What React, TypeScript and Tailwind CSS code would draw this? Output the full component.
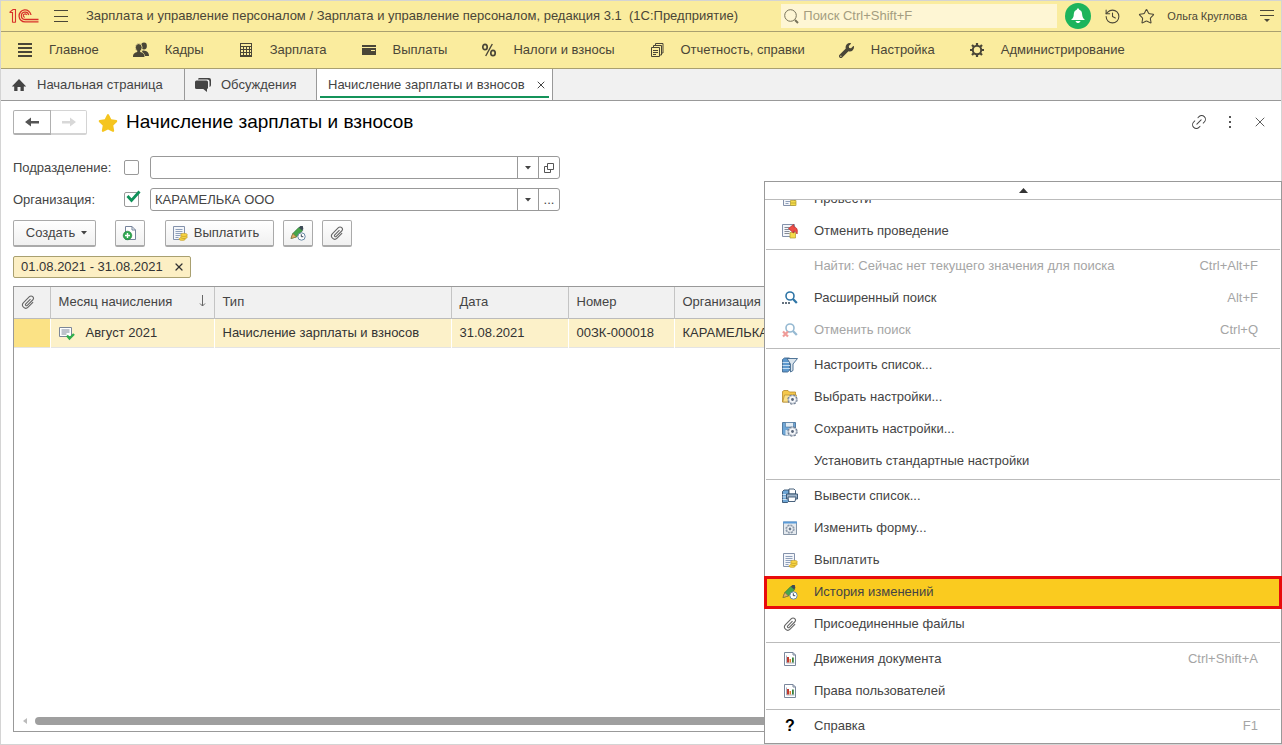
import React from "react";
import { History, Link2, Star, X } from "lucide-react";
import { FaStar, FaWrench } from "react-icons/fa";

/* ---------- Icons ---------- */

function Logo() {
  return (
    <svg width="30" height="16" viewBox="0 0 30 16" fill="none" stroke="#d8312a" aria-label="1С">
      <path d="M0.500 4.500H3.500V14.500M0.800 4.200L4 1.500H6.500V14.500M3.500 14.300H6.500" strokeWidth="1.100" />
      <path d="M22 7A6 6 0 1 0 16 13.900H29.500" strokeWidth="1.300" />
      <path d="M19.700 7A3.700 3.700 0 1 0 16 11.500H29.500" strokeWidth="1.300" />
      <path d="M17.600 7A1.700 1.700 0 1 0 16 9.300" strokeWidth="1.100" />
    </svg>
  );
}

function LinesIcon() {
  return (
    <svg width="16" height="16" viewBox="0 0 16 16" fill="#4a4637">
      <path d="M1 1h14v2H1zM1 5h14v2H1zM1 9h14v2H1zM1 13h14v2H1z" />
    </svg>
  );
}

function PeopleIcon() {
  return (
    <svg width="16" height="16" viewBox="0 0 16 16" fill="#4a4637">
      <ellipse cx="11" cy="4" rx="2.900" ry="3.400" />
      <path d="M9.500 8.500c3 0 6.500 1 6.500 5.500h-4c-.3-2-1.200-3-3-4z" />
      <ellipse cx="5.700" cy="5.500" rx="3.400" ry="3.900" stroke="#faec9e" strokeWidth="0.800" />
      <path d="M4.300 8h2.800v2c2.500.5 4.400 1.500 4.400 5H0c0-3.500 1.800-4.500 4.300-5z" />
    </svg>
  );
}

function CalculatorIcon() {
  return (
    <svg width="16" height="16" viewBox="0 0 16 16">
      <rect x="2" y="1" width="12" height="14" fill="#4a4637" />
      <rect x="3" y="2" width="10" height="2" fill="#faec9e" />
      {[5, 8, 11].map((y) =>
        [3, 6, 9, 12].map((x) => (
          <rect key={`${x}-${y}`} x={x} y={y} width={x === 12 ? 1 : 2} height="2" fill="#faec9e" />
        ))
      )}
    </svg>
  );
}

function CardIcon() {
  return (
    <svg width="16" height="16" viewBox="0 0 16 16">
      <path d="M1 3h14v2H1zM1 6h14v7H1z" fill="#4a4637" />
      <rect x="10" y="8" width="4" height="1" fill="#faec9e" />
    </svg>
  );
}

function PercentIcon() {
  return (
    <svg width="16" height="16" viewBox="0 0 16 16" fill="none" stroke="#4a4637" strokeWidth="1.700">
      <ellipse cx="4" cy="5" rx="2.200" ry="2.700" />
      <ellipse cx="12" cy="11" rx="2.200" ry="2.700" />
      <path d="M11.300 2L4.700 14" strokeWidth="1.400" />
    </svg>
  );
}

function PagesIcon() {
  return (
    <svg width="16" height="16" viewBox="0 0 16 16" fill="none" stroke="#4a4637">
      <path d="M2.500 5.500h8v9h-8zM4.500 5V3.500h8v9.500H11M6.500 3V1.500h7.500v9.500H13" />
      <path d="M4 8.500h5M4 10.500h5M4 12.500h3" />
    </svg>
  );
}

function GearIcon() {
  return (
    <svg width="16" height="16" viewBox="0 0 16 16" fill="none" stroke="#4a4637">
      <circle cx="8" cy="8" r="4.200" strokeWidth="2" />
      <path
        d="M8 1v2.500M8 12.500V15M1 8h2.500M12.500 8H15M3 3l2 2M11 11l2 2M13 3l-2 2M5 11l-2 2"
        strokeWidth="2.200"
      />
    </svg>
  );
}

function HomeIcon() {
  return (
    <svg width="16" height="16" viewBox="0 0 16 16" fill="#444">
      <path d="M8 2L.8 9.500h2.400V14h3.300v-4h3v4h3.300V9.500h2.400z" />
    </svg>
  );
}

function ChatIcon() {
  return (
    <svg width="18" height="16" viewBox="0 0 18 16" fill="#444">
      <path d="M5 1h10a2 2 0 0 1 2 2v5a2 2 0 0 1-1.500 2V4.500a2 2 0 0 0-2-2H4A2 2 0 0 1 5 1z" />
      <rect x="1" y="3.500" width="13" height="8.500" rx="1.500" />
      <path d="M8 11h5v4z" />
    </svg>
  );
}

function CaretDown() {
  return (
    <svg width="6" height="4" viewBox="0 0 6 4" fill="#444" className="shrink-0">
      <path d="M0 0h6L3 3.500z" />
    </svg>
  );
}

function Clip() {
  return (
    <svg width="16" height="16" viewBox="0 0 16 16" fill="none" stroke="#666" strokeWidth="1.100">
      <path d="M10.500 5.200L5.800 9.900a1 1 0 0 0 1.500 1.500l5.400-5.400a2.300 2.300 0 0 0-3.300-3.300L3.500 8.600a3.200 3.200 0 0 0 4.600 4.600l5-5" />
    </svg>
  );
}

function Sheet() {
  return (
    <>
      <path d="M1.500 1.500h11v13h-11z" fill="#f4f6fa" stroke="#8492ab" />
      <path d="M3.500 4.500h7M3.500 6.500h7M3.500 8.500h7M3.500 10.500h5M3.500 12.500h3" stroke="#8fa0bb" />
    </>
  );
}

function Coins() {
  return (
    <g fill="#f7d443" stroke="#b08a1c" strokeWidth="0.500">
      <ellipse cx="10.200" cy="13.900" rx="3.200" ry="1.500" />
      <ellipse cx="12" cy="12" rx="3.400" ry="1.600" />
      <ellipse cx="12" cy="9.900" rx="3.400" ry="1.600" />
    </g>
  );
}

function PayIcon() {
  return (
    <svg width="16" height="16" viewBox="0 0 16 16">
      <Sheet />
      <Coins />
    </svg>
  );
}

function PostIcon() {
  return (
    <svg width="16" height="16" viewBox="0 0 16 16">
      <Sheet />
      <path d="M8.500 9.500h5.500v5h-5.500z" fill="#f5dc4a" stroke="#b09a2c" strokeWidth="0.700" />
      <path d="M8.500 12h5.500" stroke="#b09a2c" strokeWidth="0.700" />
    </svg>
  );
}

function UnpostIcon() {
  return (
    <svg width="16" height="16" viewBox="0 0 16 16">
      <path d="M0.500 1.500h12v12h-12z" fill="#f4f6fa" stroke="#8492ab" />
      <path d="M2.500 4.500h5M2.500 6.500h5M2.500 8.500h5M2.500 10.500h5" stroke="#858b96" />
      <path d="M8 9.500h5.500v5.500H8z" fill="#f5dc4a" stroke="#b09a2c" strokeWidth="0.700" />
      <path d="M6.500 5.500l5-4v2.200c3.500.3 4.500 3.500 3.500 7.300-.8-2-1.700-2.800-3.500-3v2z" fill="#ee4c46" stroke="#b3241f" strokeWidth="0.700" />
    </svg>
  );
}

function AddDocIcon() {
  return (
    <svg width="16" height="16" viewBox="0 0 16 16">
      <path d="M3.500 1.500h6.500l3.500 3.500v9.500H3.500z" fill="#fff" stroke="#75839b" />
      <path d="M10 1.500V5h3.500" fill="none" stroke="#75839b" />
      <circle cx="5.500" cy="10.500" r="4.300" fill="#2fa84f" stroke="#1b7d38" strokeWidth="0.600" />
      <path d="M5.500 8v5M3 10.500h5" stroke="#fff" strokeWidth="1.400" />
    </svg>
  );
}

function PencilClockIcon() {
  return (
    <svg width="16" height="16" viewBox="0 0 16 16">
      <path d="M1 13.500l1.800-5L9 2.300l3.600 3.300-6.200 6.300z" fill="#47a64b" stroke="#2d7437" strokeWidth="0.700" />
      <path d="M1 13.500l1.800-5 3.600 3.400z" fill="#e3b06a" stroke="#8d6b3b" strokeWidth="0.600" />
      <path d="M8.800 2.500l1.500-1.400h2.500l.6 3-1.200 1.500z" fill="#3c4a55" />
      <circle cx="11.500" cy="11.500" r="3.700" fill="#fff" stroke="#6889a5" />
      <path d="M11.300 9.300v2.400h2" fill="none" stroke="#345" />
    </svg>
  );
}

function DocCheckIcon() {
  return (
    <svg width="16" height="16" viewBox="0 0 16 16" fill="none">
      <path d="M.5 2.500h12v9H.5z" fill="#fff" stroke="#7c8798" />
      <path d="M2.500 5h8M2.500 7h8M2.500 9h5" stroke="#7c8798" />
      <path d="M8 10.500l2.500 3L15 9" stroke="#2fae4c" strokeWidth="2.400" />
    </svg>
  );
}

function SearchMoreIcon({ cancel = false }: { cancel?: boolean }) {
  return (
    <svg width="16" height="16" viewBox="0 0 16 16" fill="none" className={cancel ? "opacity-50" : ""}>
      <circle cx="8" cy="6" r="4" stroke="#2e75a6" strokeWidth="1.600" />
      <path d="M11 9l3.800 4" stroke="#2e75a6" strokeWidth="2.200" />
      {cancel ? (
        <path d="M1 9.500l5 5M6 9.500l-5 5" stroke="#e23b35" strokeWidth="2.200" />
      ) : (
        <path d="M0 13h2M3 13h2M6 13h2" stroke="#345" strokeWidth="1.600" />
      )}
    </svg>
  );
}

function FilterListIcon() {
  return (
    <svg width="16" height="16" viewBox="0 0 16 16" stroke="#41688d" strokeWidth="0.900">
      <path d="M.5 2.500l2-1.500h5v12.500l-2 1.500h-5z" fill="#5e99ce" />
      <path d="M.5 5.500h8M.5 8.500h8M.5 11.500h8" stroke="#cfe3f5" />
      <path d="M5 1.500h10.500L11 7v6.500l-2.500 1.500V7z" fill="#dbe5ed" />
    </svg>
  );
}

function SmallGear() {
  return (
    <>
      <circle cx="10.500" cy="10.500" r="4.500" fill="#eef1f5" stroke="#66758a" strokeWidth="1.300" strokeDasharray="2.200 1.330" />
      <circle cx="10.500" cy="10.500" r="3.900" fill="#f4f6f9" stroke="#7c8a9d" strokeWidth="0.600" />
      <circle cx="10.500" cy="10.500" r="1.400" fill="#59667a" />
    </>
  );
}

function FolderGearIcon() {
  return (
    <svg width="16" height="16" viewBox="0 0 16 16">
      <path d="M.5 2.500l1.500-1h4l1.500 1.500h6v10H.5z" fill="#f5c84c" stroke="#b5892b" strokeWidth="0.800" />
      <path d="M2.500 6h12l-2 7H.7z" fill="#fbe08a" stroke="#b5892b" strokeWidth="0.700" />
      <SmallGear />
    </svg>
  );
}

function DiskGearIcon() {
  return (
    <svg width="16" height="16" viewBox="0 0 16 16">
      <path d="M.5 1.500h13v12.500h-12l-1-1z" fill="#6ea6d6" stroke="#47729a" strokeWidth="0.900" />
      <path d="M3.500 1.500h8v4.500h-8z" fill="#e3edf5" stroke="#47729a" strokeWidth="0.600" />
      <path d="M3.500 9h5v5h-5z" fill="#dce6ee" />
      <SmallGear />
    </svg>
  );
}

function PrintListIcon() {
  return (
    <svg width="16" height="16" viewBox="0 0 16 16" stroke="#34506e" strokeWidth="0.900">
      <path d="M.5 3.500l1.500-1.500h5v11l-1.500 1.500h-5z" fill="#6ea6d6" />
      <path d="M.5 6.500h6M.5 9h6M.5 11.500h6" stroke="#dcebf7" />
      <path d="M7 1h5l1.500 1.500V6H7z" fill="#fff" />
      <path d="M4.500 6h11v5h-11z" fill="#9fb4c9" />
      <path d="M6 9h8l-1 4.500H6.500z" fill="#fff" />
    </svg>
  );
}

function FormGearIcon() {
  return (
    <svg width="16" height="16" viewBox="0 0 16 16">
      <path d="M1.500 2h13v12.500h-13z" fill="#e4e9ee" stroke="#7b8b9d" strokeWidth="0.900" />
      <path d="M1 1.500h14v2H1z" fill="#5b9bd8" />
      <circle cx="8" cy="9" r="4" fill="#f7f9fb" stroke="#8795a6" strokeWidth="1.200" strokeDasharray="2 1.140" />
      <circle cx="8" cy="9" r="3.300" fill="none" stroke="#8795a6" strokeWidth="0.700" />
      <circle cx="8" cy="9" r="1.400" fill="#68798c" />
    </svg>
  );
}

function ReportIcon() {
  return (
    <svg width="16" height="16" viewBox="0 0 16 16">
      <path d="M2.500 1.500h8.500l2.500 2.500v10.500h-11z" fill="#fff" stroke="#7a879c" />
      <path d="M11 1.500V4h2.500" fill="none" stroke="#7a879c" />
      <path d="M4.500 4.500v7.500h8" fill="none" stroke="#aab3c1" />
      <path d="M5 6h2v5.500H5z" fill="#c0392f" />
      <path d="M7.500 8h1.500v3.500H7.500z" fill="#e07b2f" />
      <path d="M10 6.500h1.800v5H10z" fill="#38803d" />
    </svg>
  );
}

function HelpIcon() {
  return <span className="w-4 text-center text-base leading-4 font-bold text-black">?</span>;
}

/* ---------- Data ---------- */

const sections = [
  { title: "Главное", icon: <LinesIcon /> },
  { title: "Кадры", icon: <PeopleIcon /> },
  { title: "Зарплата", icon: <CalculatorIcon /> },
  { title: "Выплаты", icon: <CardIcon /> },
  { title: "Налоги и взносы", icon: <PercentIcon /> },
  { title: "Отчетность, справки", icon: <PagesIcon /> },
  { title: "Настройка", icon: <FaWrench size={15} className="-scale-x-100 rotate-90" /> },
  { title: "Администрирование", icon: <GearIcon /> },
];

interface MenuItem {
  title: string;
  icon?: React.ReactNode;
  shortcut?: string;
  disabled?: boolean;
  active?: boolean;
}

const menuGroups: MenuItem[][] = [
  [
    { title: "Провести", icon: <PostIcon /> },
    { title: "Отменить проведение", icon: <UnpostIcon /> },
  ],
  [
    { title: "Найти: Сейчас нет текущего значения для поиска", shortcut: "Ctrl+Alt+F", disabled: true },
    { title: "Расширенный поиск", icon: <SearchMoreIcon />, shortcut: "Alt+F" },
    { title: "Отменить поиск", icon: <SearchMoreIcon cancel />, shortcut: "Ctrl+Q", disabled: true },
  ],
  [
    { title: "Настроить список...", icon: <FilterListIcon /> },
    { title: "Выбрать настройки...", icon: <FolderGearIcon /> },
    { title: "Сохранить настройки...", icon: <DiskGearIcon /> },
    { title: "Установить стандартные настройки" },
  ],
  [
    { title: "Вывести список...", icon: <PrintListIcon /> },
    { title: "Изменить форму...", icon: <FormGearIcon /> },
    { title: "Выплатить", icon: <PayIcon /> },
    { title: "История изменений", icon: <PencilClockIcon />, active: true },
    { title: "Присоединенные файлы", icon: <Clip /> },
  ],
  [
    { title: "Движения документа", icon: <ReportIcon />, shortcut: "Ctrl+Shift+A" },
    { title: "Права пользователей", icon: <ReportIcon /> },
  ],
  [{ title: "Справка", icon: <HelpIcon />, shortcut: "F1" }],
];

/* ---------- Parts ---------- */

function TopBar() {
  return (
    <header className="flex h-[31px] items-center border-b border-[#a9a070] bg-[#faec9e] pr-1.5 pl-2">
      <Logo />
      <button aria-label="Меню" className="ml-[15px] flex h-4 w-[14px] flex-col justify-between py-[2px]">
        <span className="h-px w-full bg-[#4a4637]" />
        <span className="h-px w-full bg-[#4a4637]" />
        <span className="h-px w-full bg-[#4a4637]" />
      </button>
      <h1 className="ml-[18px] flex-1 whitespace-pre">
        Зарплата и управление персоналом / Зарплата и управление персоналом, редакция 3.1  (1С:Предприятие)
      </h1>
      <label className="flex h-6 w-[276px] items-center gap-1 bg-[#fef6d4] pl-[3px]">
        <svg width="15" height="15" viewBox="0 0 15 15" fill="none" stroke="#77725a">
          <circle cx="6.500" cy="6.500" r="5.800" />
          <path d="M11 11l3 3" strokeWidth="2" />
        </svg>
        <input
          aria-label="Поиск"
          placeholder="Поиск Ctrl+Shift+F"
          className="min-w-0 flex-1 bg-transparent outline-none placeholder:text-[#a49d80]"
        />
      </label>
      <button aria-label="Уведомления" className="ml-2 flex size-[26px] items-center justify-center rounded-full bg-[#1db45c]">
        <svg width="16" height="16" viewBox="0 0 16 16" fill="#fff">
          <path d="M8 .5c.8 0 1.200.5 1.200 1.200C12 2.500 12 5 12.300 7.500c.2 2 1.200 3 2.700 4.500H1c1.500-1.500 2.500-2.500 2.700-4.500C4 5 4 2.500 6.800 1.700 6.800 1 7.200.5 8 .5zM5.500 13h5c-.5 1.500-1.500 2-2.500 2s-2-.5-2.500-2z" />
        </svg>
      </button>
      <button aria-label="История" className="ml-[13px]">
        <History size={17} strokeWidth={1.5} />
      </button>
      <button aria-label="Избранное" className="ml-[17px]">
        <Star size={17} strokeWidth={1.5} />
      </button>
      <a href="#user" className="ml-3 text-[11px]">
        Ольга Круглова
      </a>
      <button aria-label="Сервис" className="ml-3">
        <svg width="16" height="14" viewBox="0 0 16 14" fill="none" stroke="#4a4637">
          <path d="M1 1.500h14M1 6.500h14" />
          <path d="M5 10h6l-3 3z" fill="#4a4637" stroke="none" />
        </svg>
      </button>
    </header>
  );
}

function SectionBar() {
  return (
    <nav className="flex h-[37px] items-center gap-[34px] border-b border-[#a9a070] bg-[#faec9e] pl-4">
      {sections.map((section) => (
        <a key={section.title} href="#section" className="flex items-center gap-4 whitespace-nowrap">
          <span className="flex w-4 justify-center text-[#4a4637]">{section.icon}</span>
          {section.title}
        </a>
      ))}
    </nav>
  );
}

function TabBar() {
  return (
    <div className="flex h-8 border-b border-[#999] bg-[#f1f1f1] text-[#444]">
      <button className="flex w-[184px] items-center gap-[10px] border-r border-[#999] pl-[10px] whitespace-nowrap">
        <HomeIcon />
        Начальная страница
      </button>
      <button className="flex w-[132px] items-center gap-[9px] border-r border-[#999] pl-[9px] whitespace-nowrap">
        <ChatIcon />
        Обсуждения
      </button>
      <div className="flex w-[236px] border-r border-[#999] bg-white px-[3px] pb-[2px]">
        <div className="flex flex-1 items-center justify-between border-b-2 border-[#14935a] pt-1 pr-0.5 pl-2 whitespace-nowrap">
          <button>Начисление зарплаты и взносов</button>
          <button aria-label="Закрыть вкладку">
            <X size={12} strokeWidth={2} />
          </button>
        </div>
      </div>
    </div>
  );
}

interface FilterRowProps {
  id: string;
  label: string;
  value?: string;
  checked?: boolean;
  picker: React.ReactNode;
}

function FilterRow({ id, label, value = "", checked = false, picker }: FilterRowProps) {
  return (
    <div className="flex h-[23px] items-center">
      <label htmlFor={id} className="w-[111px]">
        {label}
      </label>
      <span className="relative flex">
        <input
          type="checkbox"
          aria-label={label}
          defaultChecked={checked}
          className="peer size-[15px] appearance-none rounded-[2px] border border-[#999] bg-white"
        />
        <svg
          width="16"
          height="14"
          viewBox="0 0 16 14"
          fill="none"
          stroke="#10925a"
          strokeWidth="2.800"
          className="pointer-events-none absolute -top-0.5 left-0.5 hidden peer-checked:block"
        >
          <path d="M1.500 6l4 4.500L13.500 1.500" />
        </svg>
      </span>
      <div className="ml-[11px] flex h-[23px] w-[410px] rounded-[3px] border border-[#999] bg-white">
        <input id={id} defaultValue={value} className="min-w-0 flex-1 bg-transparent pl-1 outline-none" />
        <button aria-label="Выбрать из списка" className="flex w-[21px] items-center justify-center border-l border-[#999]">
          <CaretDown />
        </button>
        <button aria-label="Открыть" className="flex w-[21px] items-center justify-center border-l border-[#999]">
          {picker}
        </button>
      </div>
    </div>
  );
}

function ToolButton({ className = "", children, label }: { className?: string; children: React.ReactNode; label?: string }) {
  return (
    <button
      aria-label={label}
      className={`flex h-[27px] items-center justify-center rounded-[2px] border border-b-2 border-[#aaa] bg-linear-to-b from-white to-[#f0f0f0] ${className}`}
    >
      {children}
    </button>
  );
}

function DocumentsTable() {
  return (
    <div className="flex flex-1 flex-col border border-[#999] bg-white">
      <div className="flex-1 overflow-hidden">
        <table className="w-full table-fixed border-collapse text-left">
          <colgroup>
            <col className="w-9" />
            <col className="w-[164px]" />
            <col className="w-[237px]" />
            <col className="w-[117px]" />
            <col className="w-[106px]" />
            <col />
          </colgroup>
          <thead>
            <tr className="h-[31px] border-b border-[#bbb] bg-[#f1f1f1] *:border-r *:border-[#c4c4c4] *:px-2 *:font-normal">
              <th aria-label="Файлы">
                <span className="-ml-0.5 block">
                  <Clip />
                </span>
              </th>
              <th>
                <span className="flex justify-between">
                  Месяц начисления
                  <svg width="7" height="14" viewBox="0 0 7 14" fill="none" stroke="#666">
                    <path d="M3.500 1v11M1 9.500L3.500 12 6 9.500" />
                  </svg>
                </span>
              </th>
              <th>Тип</th>
              <th>Дата</th>
              <th>Номер</th>
              <th>Организация</th>
            </tr>
          </thead>
          <tbody>
            <tr className="h-[29px] border-b border-[#e4e4e4] bg-[#fcf1c9] text-[#333] *:border-r *:border-white *:px-2">
              <td className="bg-[#fbe285]" />
              <td>
                <span className="flex items-center gap-[11px]">
                  <DocCheckIcon />
                  Август 2021
                </span>
              </td>
              <td>Начисление зарплаты и взносов</td>
              <td>31.08.2021</td>
              <td>00ЗК-000018</td>
              <td>КАРАМЕЛЬКА ООО</td>
            </tr>
          </tbody>
        </table>
      </div>
      <div className="mb-1.5 flex items-center gap-2 px-[9px]">
        <svg width="4" height="6" viewBox="0 0 4 6" fill="#bbb">
          <path d="M4 0v6L0 3z" />
        </svg>
        <div className="h-2 flex-1 rounded-full bg-[#9f9f9f]" />
      </div>
    </div>
  );
}

function MoreMenu() {
  return (
    <div className="absolute top-[180px] -right-px bottom-0 flex w-[518px] flex-col border border-[#999] bg-white text-[#444]">
      <button aria-label="Прокрутить вверх" className="flex h-[18px] shrink-0 items-center justify-center border-b border-[#bbb]">
        <svg width="9" height="5" viewBox="0 0 9 5" fill="#333">
          <path d="M0 5L4.500 0 9 5z" />
        </svg>
      </button>
      <div role="menu" className="-mx-px flex min-h-0 flex-1 flex-col justify-end overflow-hidden pb-px">
        {menuGroups.map((group, index) => (
          <div key={index} role="group" className="shrink-0">
            {index > 0 && <div className="mx-0.5 mt-[2px] h-px bg-[#bbb]" />}
            {group.map((item) => (
              <button
                key={item.title}
                role="menuitem"
                disabled={item.disabled}
                className={`flex w-full items-center text-left ${
                  item.active
                    ? "relative -mb-px h-[33px] border-3 border-[#e80c0c] bg-[#facb1f] pr-[21px] pb-px pl-[15px]"
                    : "h-8 pr-6 pl-[18px]"
                } ${item.disabled ? "text-[#a5a5a5]" : ""}`}
              >
                <span className="flex w-8 shrink-0">{item.icon}</span>
                <span className="flex-1">{item.title}</span>
                <span className="text-[#a5a5a5]">{item.shortcut}</span>
              </button>
            ))}
          </div>
        ))}
      </div>
    </div>
  );
}

export default function App() {
  return (
    <div className="relative flex min-h-screen flex-col border border-[#d4d4d4] bg-white font-['Liberation_Sans',Arial,sans-serif] text-[13px] leading-4 text-[#4a4637]">
      <TopBar />
      <SectionBar />
      <TabBar />

      <main className="flex flex-1 flex-col px-3 pt-[9px] pb-3 text-[#444]">
        {/* Form title */}
        <div className="flex h-[25px] items-center">
          <button aria-label="Назад" className="flex h-full w-[38px] items-center justify-center rounded-l-[2px] border border-b-2 border-[#b0b0b0]">
            <svg width="14" height="10" viewBox="0 0 14 10" fill="#555">
              <path d="M0 5L6 .5V4h8v2.500H6v3z" />
            </svg>
          </button>
          <button aria-label="Вперед" disabled className="flex h-full w-9 items-center justify-center rounded-r-[2px] border border-b-2 border-l-0 border-[#d4d4d4]">
            <svg width="14" height="10" viewBox="0 0 14 10" fill="#d8d8d8">
              <path d="M14 5L8 .5V4H0v2.500h8v3z" />
            </svg>
          </button>
          <FaStar size={20} color="#f5c51f" className="ml-[11px]" />
          <h2 className="ml-2 flex-1 pb-0.5 text-[19px] leading-6 text-black">Начисление зарплаты и взносов</h2>
          <div className="flex items-center gap-4 pr-px pb-0.5">
            <button aria-label="Ссылка">
              <Link2 size={18} strokeWidth={1.3} className="-rotate-45" />
            </button>
            <button aria-label="Еще" className="flex w-3 justify-center">
              <svg width="3" height="12" viewBox="0 0 3 12" fill="#555">
                <path d="M0 0h2v2H0zM0 5h2v2H0zM0 10h2v2H0z" />
              </svg>
            </button>
            <button aria-label="Закрыть">
              <X size={16} strokeWidth={1.3} />
            </button>
          </div>
        </div>

        {/* Filters */}
        <div className="mt-[21px] flex flex-col gap-[9px]">
          <FilterRow
            id="department"
            label="Подразделение:"
            picker={
              <svg width="10" height="10" viewBox="0 0 10 10" fill="none" stroke="#555">
                <path d="M3.500.5h6v6h-6zM3 3.500H.5v6h6V7" />
              </svg>
            }
          />
          <FilterRow id="organization" label="Организация:" value="КАРАМЕЛЬКА ООО" checked picker="..." />
        </div>

        {/* Commands */}
        <div className="mt-[9px] flex">
          <ToolButton className="w-[83px] gap-1.5 pl-1">
            Создать
            <CaretDown />
          </ToolButton>
          <ToolButton className="ml-[19px] w-[30px]" label="Создать копированием">
            <AddDocIcon />
          </ToolButton>
          <ToolButton className="ml-5 w-[109px] gap-1.5 pr-2">
            <PayIcon />
            Выплатить
          </ToolButton>
          <ToolButton className="ml-[9px] w-[30px]" label="История изменений">
            <PencilClockIcon />
          </ToolButton>
          <ToolButton className="ml-[9px] w-[30px]" label="Присоединенные файлы">
            <Clip />
          </ToolButton>
        </div>

        <button className="mt-[9px] mb-2 flex h-[22px] w-[178px] items-center justify-between rounded-[2px] border border-[#a9a070] bg-[#fcefc4] pr-[5px] pl-[7px] text-[#333]">
          01.08.2021 - 31.08.2021
          <X size={12} strokeWidth={2.5} />
        </button>

        <DocumentsTable />
      </main>

      <MoreMenu />
    </div>
  );
}
